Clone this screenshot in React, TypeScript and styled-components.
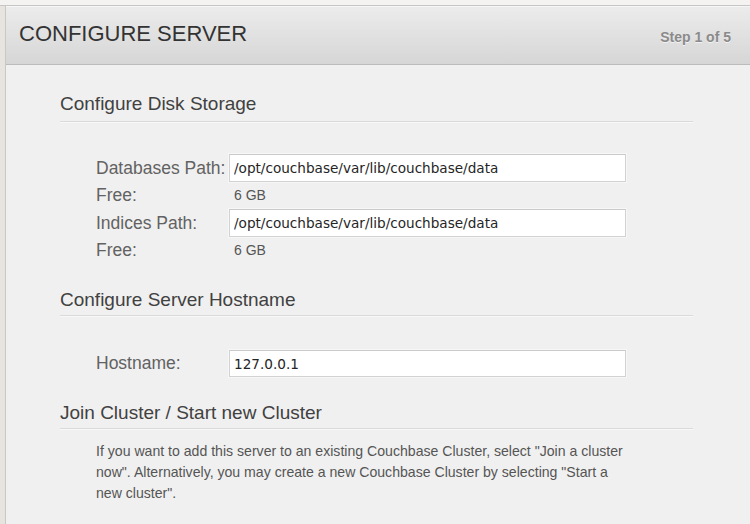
import React from "react";
import styled, { createGlobalStyle } from "styled-components";

const GlobalStyle = createGlobalStyle`
  html, body {
    margin: 0;
    padding: 0;
    background: #f4f3f1;
    font-family: "Liberation Sans", Arial, sans-serif;
  }
  * { box-sizing: border-box; }
`;

const TopStrip = styled.div`
  height: 6px;
  background: #f4f3f1;
  border-bottom: 1px solid #c6c6c6;
`;

const Frame = styled.div`
  display: flex;
  min-height: 518px;
`;

const SideStrip = styled.div`
  width: 6px;
  flex: none;
  background: #e7e4df;
  border-right: 1px solid #cbc8c3;
`;

const Panel = styled.div`
  flex: 1;
  background: #f0f0f0;
  display: flex;
  flex-direction: column;
`;

const Header = styled.header`
  height: 59px;
  display: flex;
  align-items: baseline;
  justify-content: space-between;
  padding: 17px 19px 0 13px;
  background: linear-gradient(#ececec 0%, #e2e2e2 45%, #d6d6d6 100%);
  border-bottom: 1px solid #bcbcbc;
  box-shadow: inset 0 1px 0 #f6f6f6;
`;

const Title = styled.h1`
  margin: 0;
  font-size: 22px;
  line-height: 22px;
  font-weight: normal;
  color: #333;
`;

const StepText = styled.span`
  font-size: 14px;
  line-height: 14px;
  font-weight: bold;
  color: #8a8a8a;
  text-shadow: 0 1px 0 #f2f2f2;
  position: relative;
  top: 1px;
`;

const Body = styled.main`
  padding: 0 0 0 54px;
`;

const Section = styled.section`
  width: 633px;
`;

const SectionTitle = styled.h2<{ $gap: number; $pad: number }>`
  margin: ${(p) => p.$gap}px 0 0;
  padding-bottom: ${(p) => p.$pad}px;
  font-size: 19px;
  line-height: 24px;
  font-weight: normal;
  color: #414141;
  border-bottom: 1px solid #dadada;
  box-shadow: 0 1px 0 #f8f8f8;
`;

const Form = styled.div<{ $top: number }>`
  margin-top: ${(p) => p.$top}px;
  padding-left: 36px;
  display: grid;
  grid-template-columns: 133px 397px;
`;

const Label = styled.div<{ $h: number }>`
  height: ${(p) => p.$h}px;
  line-height: ${(p) => p.$h}px;
  font-size: 17.5px;
  color: #626262;
  white-space: nowrap;
`;

const Value = styled.div<{ $h: number }>`
  height: ${(p) => p.$h}px;
  line-height: ${(p) => p.$h}px;
  font-size: 14px;
  color: #555;
  padding-left: 5px;
`;

const TextInput = styled.input<{ $h: number }>`
  display: block;
  width: 397px;
  height: ${(p) => p.$h}px;
  margin: 0;
  padding: 0 4px;
  border: 1px solid #d2d2d2;
  border-top-color: #cacaca;
  background: #fff;
  font-family: "DejaVu Sans", sans-serif;
  font-size: 13.6px;
  color: #252525;
  outline: none;
  box-shadow: 0 0 0 1px #f7f7f7;
`;

const Paragraph = styled.p`
  margin: 12px 0 0 36px;
  width: 530px;
  font-size: 14.1px;
  line-height: 21px;
  color: #555;
`;

export default function App() {
  return (
    <>
      <GlobalStyle />
      <TopStrip />
      <Frame>
        <SideStrip />
        <Panel>
          <Header>
            <Title>CONFIGURE SERVER</Title>
            <StepText>Step 1 of 5</StepText>
          </Header>
          <Body>
            <Section>
              <SectionTitle $gap={27} $pad={5}>Configure Disk Storage</SectionTitle>
              <Form $top={32}>
                <Label $h={28}>Databases Path:</Label>
                <TextInput $h={28} defaultValue="/opt/couchbase/var/lib/couchbase/data" />
                <Label $h={27}>Free:</Label>
                <Value $h={27}>6 GB</Value>
                <Label $h={28}>Indices Path:</Label>
                <TextInput $h={28} defaultValue="/opt/couchbase/var/lib/couchbase/data" />
                <Label $h={27}>Free:</Label>
                <Value $h={27}>6 GB</Value>
              </Form>
            </Section>
            <Section>
              <SectionTitle $gap={24} $pad={3}>Configure Server Hostname</SectionTitle>
              <Form $top={34}>
                <Label $h={27}>Hostname:</Label>
                <TextInput $h={27} defaultValue="127.0.0.1" />
              </Form>
            </Section>
            <Section>
              <SectionTitle $gap={24} $pad={3}>Join Cluster / Start new Cluster</SectionTitle>
              <Paragraph>
                If you want to add this server to an existing Couchbase Cluster, select "Join a cluster
                now". Alternatively, you may create a new Couchbase Cluster by selecting "Start a new
                cluster".
              </Paragraph>
            </Section>
          </Body>
        </Panel>
      </Frame>
    </>
  );
}
